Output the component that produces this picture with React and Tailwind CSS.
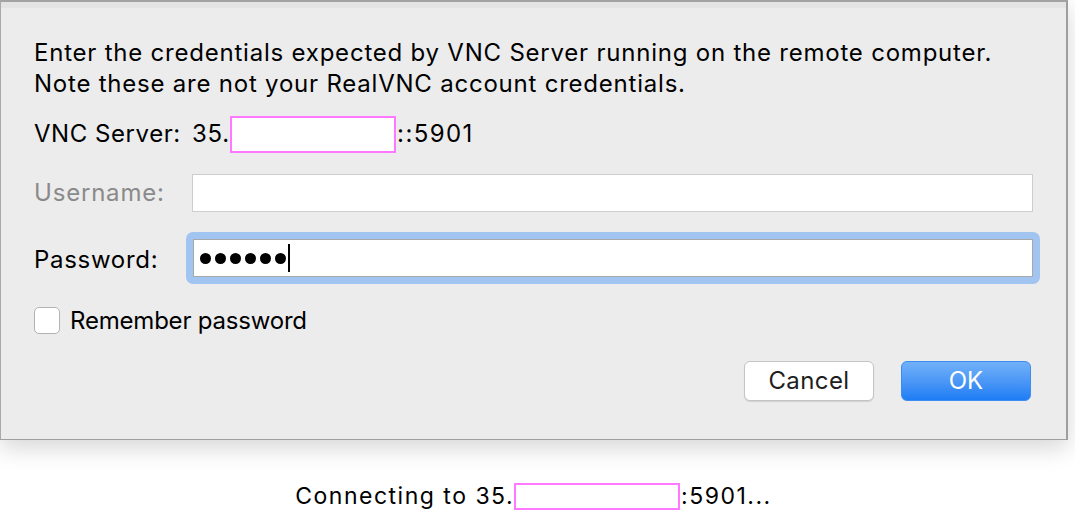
import React from 'react'

// Redacted host part of the address
function Masked({ className = '' }) {
  return <span className={`inline-block shrink-0 bg-white border-2 border-[#ff78ff] ${className}`} />
}

export default function App() {
  return (
    <div
      className="w-[1075px] h-[525px] bg-white overflow-hidden text-black"
      style={{ fontFamily: 'Inter, "Liberation Sans", Arial, sans-serif' }}
    >
      {/* dialog sheet */}
      <div className="w-[1068px] h-[440px] bg-[#ececec] border-l border-r-2 border-b border-t-2 border-l-[#a9a9a9] border-r-[#9e9e9e] border-b-[#9e9e9e] border-t-[#a3a3a3] shadow-[0_8px_22px_rgba(0,0,0,0.16)]">
        <div className="h-[6px] bg-[#e4e4e4]" />
        <div className="pl-[33px] pr-[26px] pt-[29px]">
          <p className="text-[24px] leading-[31px] tracking-[0.78px]">
            Enter the credentials expected by VNC Server running on the remote computer.
            <br />
            Note these are not your RealVNC account credentials.
          </p>

          <div className="mt-[16px] h-[38px] flex items-center text-[24px]">
            <span className="w-[158px] shrink-0 tracking-[0.55px]">VNC Server:</span>
            <span className="tracking-[0.8px]">35.</span>
            <Masked className="w-[166px] h-[37px]" />
            <span className="ml-[1px] tracking-[1.4px]">::5901</span>
          </div>

          <div className="mt-[21px] h-[38px] flex items-center">
            <span className="w-[158px] shrink-0 text-[24px] text-[#8a8a8a] tracking-[0.8px]">Username:</span>
            <div className="w-[841px] shrink-0 h-[38px] bg-white border border-[#cdcdcd]" />
          </div>

          <div className="mt-[20px] h-[52px] flex items-center">
            <span className="w-[152px] shrink-0 text-[24px] tracking-[0.7px] pt-[3px]">Password:</span>
            <div className="w-[854px] shrink-0 h-[52px] rounded-[7px] bg-[#a2c4f1] p-[7px]">
              <div className="h-full bg-white border border-[#a9a9a9] flex items-center pl-[6px] gap-[4px]">
                <span className="w-[11px] h-[11px] rounded-full bg-black" />
                <span className="w-[11px] h-[11px] rounded-full bg-black" />
                <span className="w-[11px] h-[11px] rounded-full bg-black" />
                <span className="w-[11px] h-[11px] rounded-full bg-black" />
                <span className="w-[11px] h-[11px] rounded-full bg-black" />
                <span className="w-[11px] h-[11px] rounded-full bg-black" />
                <span className="-ml-[2px] w-[2px] h-[28px] bg-black" />
              </div>
            </div>
          </div>

          <div className="mt-[23px] h-[27px] flex items-center">
            <span className="w-[26px] h-[27px] bg-white border border-[#b3b3b3] rounded-[5px]" />
            <span className="ml-[10px] text-[24px] tracking-[-0.2px]">Remember password</span>
          </div>

          <div className="mt-[27px] mr-[9px] flex justify-end gap-[27px]">
            <button className="w-[130px] h-[40px] rounded-[6px] bg-white border border-[#c4c4c4] shadow-[0_1px_1px_rgba(0,0,0,0.12)] text-[24px] text-[#1e1e1e] tracking-[0.4px]">
              Cancel
            </button>
            <button className="w-[130px] h-[40px] rounded-[6px] bg-gradient-to-b from-[#72b1f8] to-[#1c7cf4] border border-[#3c8cf2] text-[24px] text-white">
              OK
            </button>
          </div>
        </div>
      </div>

      <div className="mt-[42px] h-[28px] flex justify-center items-center text-[23px] tracking-[1.5px] pr-[8px]">
        <span>Connecting to 35.</span>
        <Masked className="w-[166px] h-[27px]" />
        <span className="ml-[1px]">:5901...</span>
      </div>
    </div>
  )
}
